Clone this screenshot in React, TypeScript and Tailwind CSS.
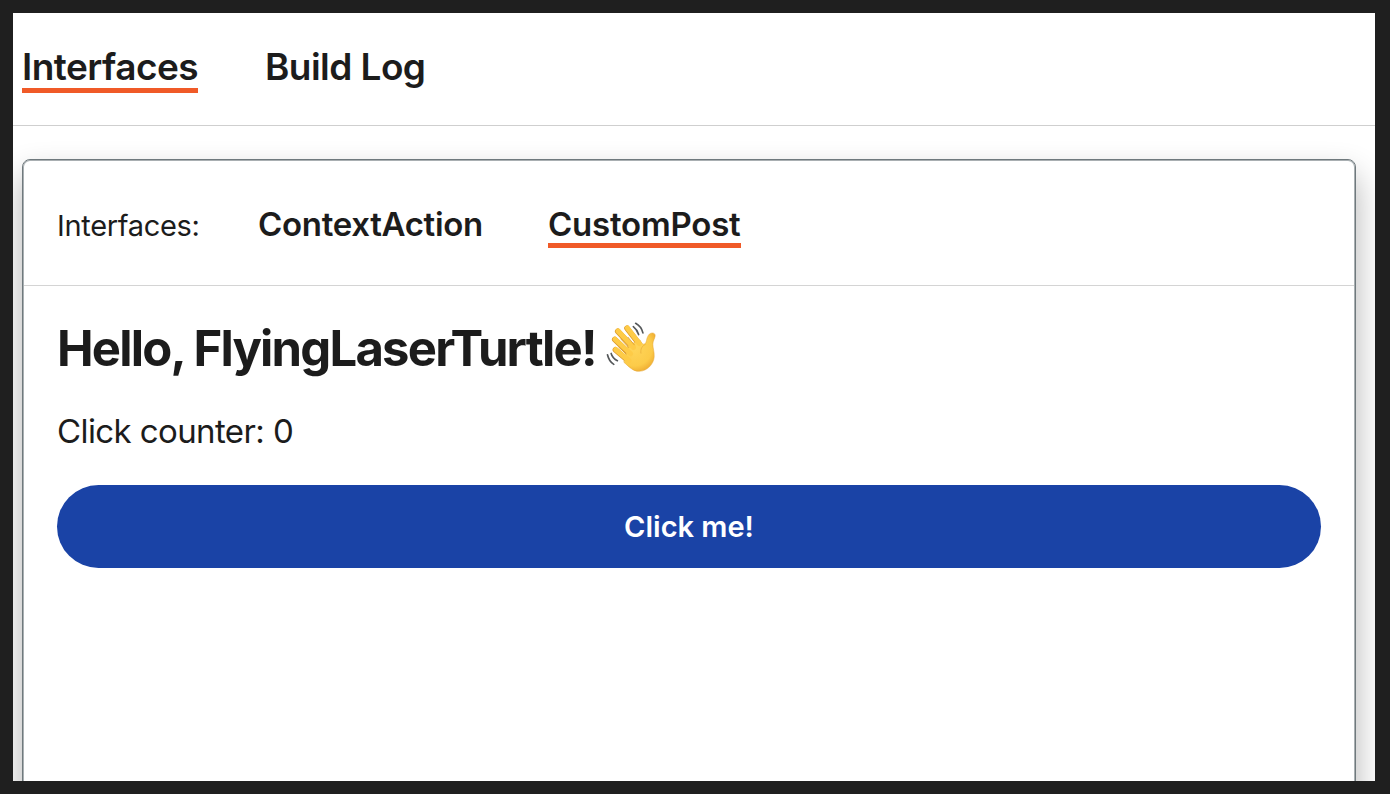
import { useState } from "react";

function WavingHand() {
  return (
    <svg
      role="img"
      aria-label="Waving hand"
      viewBox="34 34 150 151"
      className="mt-px h-[50px] w-[50px] shrink-0"
      fill="none"
      strokeLinecap="round"
      strokeLinejoin="round"
    >
      <defs>
        <radialGradient id="skin" gradientUnits="userSpaceOnUse" cx="118" cy="112" r="78">
          <stop offset="0" stopColor="#ffd55a" />
          <stop offset="0.7" stopColor="#fccb49" />
          <stop offset="1" stopColor="#eda92f" />
        </radialGradient>
      </defs>
      <g stroke="#dc9a2c" strokeWidth="17">
        <path d="M97 53 L132 98M69 62 L112 108M60 87 L103 128M62 118 L96 147" />
      </g>
      <path
        d="M90 146 L100 105 L136 88 C141 98 146 103 151 100 C157 95 155 85 160 77 C166 63 183 65 182 76 C181 84 175 91 175 101 C175 113 180 124 179 140 C177 162 158 182 134 183 C116 184 103 169 88 156 Z"
        fill="url(#skin)"
        stroke="#e5a637"
        strokeWidth="1.5"
      />
      <g stroke="#fecb47" strokeWidth="15">
        <path d="M98 52 L134 99M70 61 L117 111M61 86 L108 130M63 117 L103 151" />
      </g>
      <path
        d="M100 80 L119 103M78 85 L102 111M72 110 L94 130"
        stroke="#d99b2e"
        strokeWidth="2.5"
      />
      <path d="M152 102 C142 106 137 116 139 128" stroke="#eab03b" strokeWidth="2.5" />
      <path
        d="M116 48 C124 54 129 62 132 72M123 38 C134 44 142 54 145 67M38 133 C41 146 47 156 57 162M49 129 C52 139 59 147 68 151"
        stroke="#55585a"
        strokeWidth="5"
      />
    </svg>
  );
}

export default function App() {
  const [count, setCount] = useState(0);
  return (
    <div className="h-[794px] w-[1390px] overflow-hidden bg-[#1f1f1f] pt-[13px] pr-[15px] pb-[13px] pl-[13px] font-['Inter','Liberation_Sans',sans-serif] text-[#1c1c1c]">
      <div className="flex h-full flex-col overflow-hidden bg-white">
        <nav className="flex h-[113px] shrink-0 items-start gap-[67px] border-b border-[#cfcfcf] pt-[33px] pl-[9px] text-[37px] leading-[42px] font-semibold whitespace-nowrap">
          <button className="h-[47px] w-[176px] border-b-[5px] border-[#f05a28] text-left tracking-[-0.55px]">
            Interfaces
          </button>
          <button className="w-[162px] text-left tracking-[-0.55px]">Build Log</button>
        </nav>
        <main className="mt-[33px] mr-[19px] ml-[9px] h-[700px] shrink-0 rounded-lg border border-[#6f797d] bg-white shadow-[0_16px_32px_rgba(0,0,0,0.3),inset_0_0_0_1px_#a9afb2]">
          <div className="mx-px flex h-[126px] items-start border-b border-[#d4d4d4] pt-[45px] pl-[32px] whitespace-nowrap">
            <span className="w-[202px] pt-[2px] pl-px text-[29px] leading-[38px] tracking-[-0.32px]">
              Interfaces:
            </span>
            <button className="w-[290px] text-left text-[33px] leading-[38px] font-semibold tracking-[-0.32px]">
              ContextAction
            </button>
            <button className="h-[43px] w-[193px] border-b-[5px] border-[#f05a28] text-left text-[33px] leading-[38px] font-semibold tracking-[-0.22px]">
              CustomPost
            </button>
          </div>
          <div className="pr-[34px] pl-[34px] whitespace-nowrap">
            <h1 className="flex items-start pt-[35px] text-[49px] leading-[56px] font-bold">
              <span className="w-[549px] tracking-[-1.78px]">Hello, FlyingLaserTurtle!</span>
              <WavingHand />
            </h1>
            <p className="mt-[33px] text-[33px] leading-[42px] tracking-[-0.6px]">
              Click counter: {count}
            </p>
            <button
              onClick={() => setCount(count + 1)}
              className="mt-[33px] h-[83px] w-full rounded-full bg-[#1a43a6] text-[29px] font-semibold text-white"
            >
              Click me!
            </button>
          </div>
        </main>
      </div>
    </div>
  );
}
